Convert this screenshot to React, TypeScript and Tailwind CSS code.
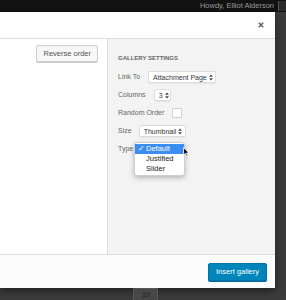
import React from 'react';

const SelectArrows = () => (
  <svg width="4" height="7" viewBox="0 0 4 7" className="shrink-0">
    <path d="M0 2.8 L2 0.4 L4 2.8 Z" fill="#444" />
    <path d="M0 4.2 L2 6.6 L4 4.2 Z" fill="#444" />
  </svg>
);

const FakeSelect: React.FC<{ label: string; width: string }> = ({ label, width }) => (
  <div
    className={`${width} h-[12px] bg-white border border-[#dcdcdc] rounded-[2px] shadow-[0_1px_1px_rgba(0,0,0,0.06)] flex items-center justify-between gap-[2px] pl-[4px] pr-[3px] text-[7px] text-[#32373c] leading-none whitespace-nowrap`}
  >
    <span>{label}</span>
    <SelectArrows />
  </div>
);

const App: React.FC = () => {
  return (
    <div className="w-[286px] h-[300px] bg-[#3b3b3b] flex flex-col overflow-hidden font-['Liberation_Sans',Arial,sans-serif]">
      {/* admin bar */}
      <div className="h-[12px] bg-[#121212] flex items-center justify-end shrink-0">
        <span className="text-[7.5px] text-[#9a9a9a] leading-none mr-[4px] whitespace-nowrap">Howdy, Elliot Alderson</span>
        <div className="w-[8px] h-[10px] bg-[#2a2a2a] border-l border-[#555]" />
      </div>

      {/* modal */}
      <div className="flex shrink-0">
        <div className="w-[275px] h-[276px] bg-white flex flex-col shadow-[0_3px_8px_rgba(0,0,0,0.45)]">
          {/* header */}
          <div className="h-[27px] border-b border-[#dddddd] flex items-center justify-end pr-[11px] shrink-0">
            <svg width="6" height="6" viewBox="0 0 6 6">
              <path d="M0.8 0.8 L5.2 5.2 M5.2 0.8 L0.8 5.2" stroke="#666" strokeWidth="1.6" />
            </svg>
          </div>

          {/* body */}
          <div className="flex flex-1">
            <div className="w-[107px] flex justify-end pr-[9px] pt-[6px]">
              <div className="h-[17px] px-[6px] bg-[#f7f7f7] border border-[#cccccc] rounded-[2px] shadow-[0_1px_0_#cccccc] text-[7.5px] text-[#555] flex items-center leading-none whitespace-nowrap">
                Reverse order
              </div>
            </div>
            <div className="flex-1 bg-[#f3f3f3] border-l border-[#dddddd] pl-[10px] pt-[16px]">
              <div className="text-[6px] font-bold text-[#666] uppercase leading-none mb-[7px] whitespace-nowrap">Gallery Settings</div>
              <div className="flex flex-col text-[7px] text-[#666] whitespace-nowrap">
                <div className="h-[18px] flex items-center gap-[8px]">
                  <span>Link To</span>
                  <FakeSelect label="Attachment Page" width="w-[68px]" />
                </div>
                <div className="h-[18px] flex items-center gap-[8px]">
                  <span>Columns</span>
                  <FakeSelect label="3" width="w-[17px]" />
                </div>
                <div className="h-[18px] flex items-center gap-[8px]">
                  <span>Random Order</span>
                  <div className="w-[10px] h-[10px] bg-white border border-[#cfcfcf] rounded-[1px]" />
                </div>
                <div className="h-[18px] flex items-center gap-[7px]">
                  <span>Size</span>
                  <FakeSelect label="Thumbnail" width="w-[47px]" />
                </div>
                <div className="h-[18px] flex items-center relative">
                  <span>Type</span>
                  {/* open dropdown */}
                  <div className="absolute left-[16px] top-[2px] w-[51px] bg-white border border-[#cfcfcf] rounded-[3px] shadow-[0_2px_5px_rgba(0,0,0,0.25)] py-[1px] text-[7.5px] leading-none">
                    <div className="h-[10px] bg-[#3b8df1] text-white flex items-center pl-[3px]">
                      <span className="w-[8px] text-[7.5px]">✓</span>
                      <span>Default</span>
                    </div>
                    <div className="h-[10px] text-[#222] flex items-center pl-[11px]">Justified</div>
                    <div className="h-[10px] text-[#222] flex items-center pl-[11px]">Slider</div>
                  </div>
                  {/* mouse cursor */}
                  <svg className="absolute left-[65px] top-[7px]" width="7" height="10" viewBox="0 0 7 10">
                    <path d="M0.5 0.5 L0.5 8 L2.3 6.4 L3.6 9.3 L4.8 8.8 L3.6 6 L6 6 Z" fill="#111" stroke="#fff" strokeWidth="0.8" />
                  </svg>
                </div>
              </div>
            </div>
          </div>

          {/* footer */}
          <div className="h-[34px] bg-[#fcfcfc] border-t border-[#dddddd] flex items-center justify-end pr-[8px] shrink-0">
            <div className="h-[18px] w-[59px] bg-[#0085ba] border border-[#0073aa] rounded-[2px] shadow-[0_1px_0_#006799] text-[7.5px] text-white flex items-center justify-center leading-none whitespace-nowrap">
              Insert gallery
            </div>
          </div>
        </div>
      </div>

      {/* page behind */}
      <div className="flex-1 pl-[133px]">
        <div className="w-[25px] h-[14px] bg-[#474747] border border-[#555] text-[7px] text-[#1e1e1e] pl-[8px] pt-[2px] leading-none">10</div>
      </div>
    </div>
  );
};

export default App;
